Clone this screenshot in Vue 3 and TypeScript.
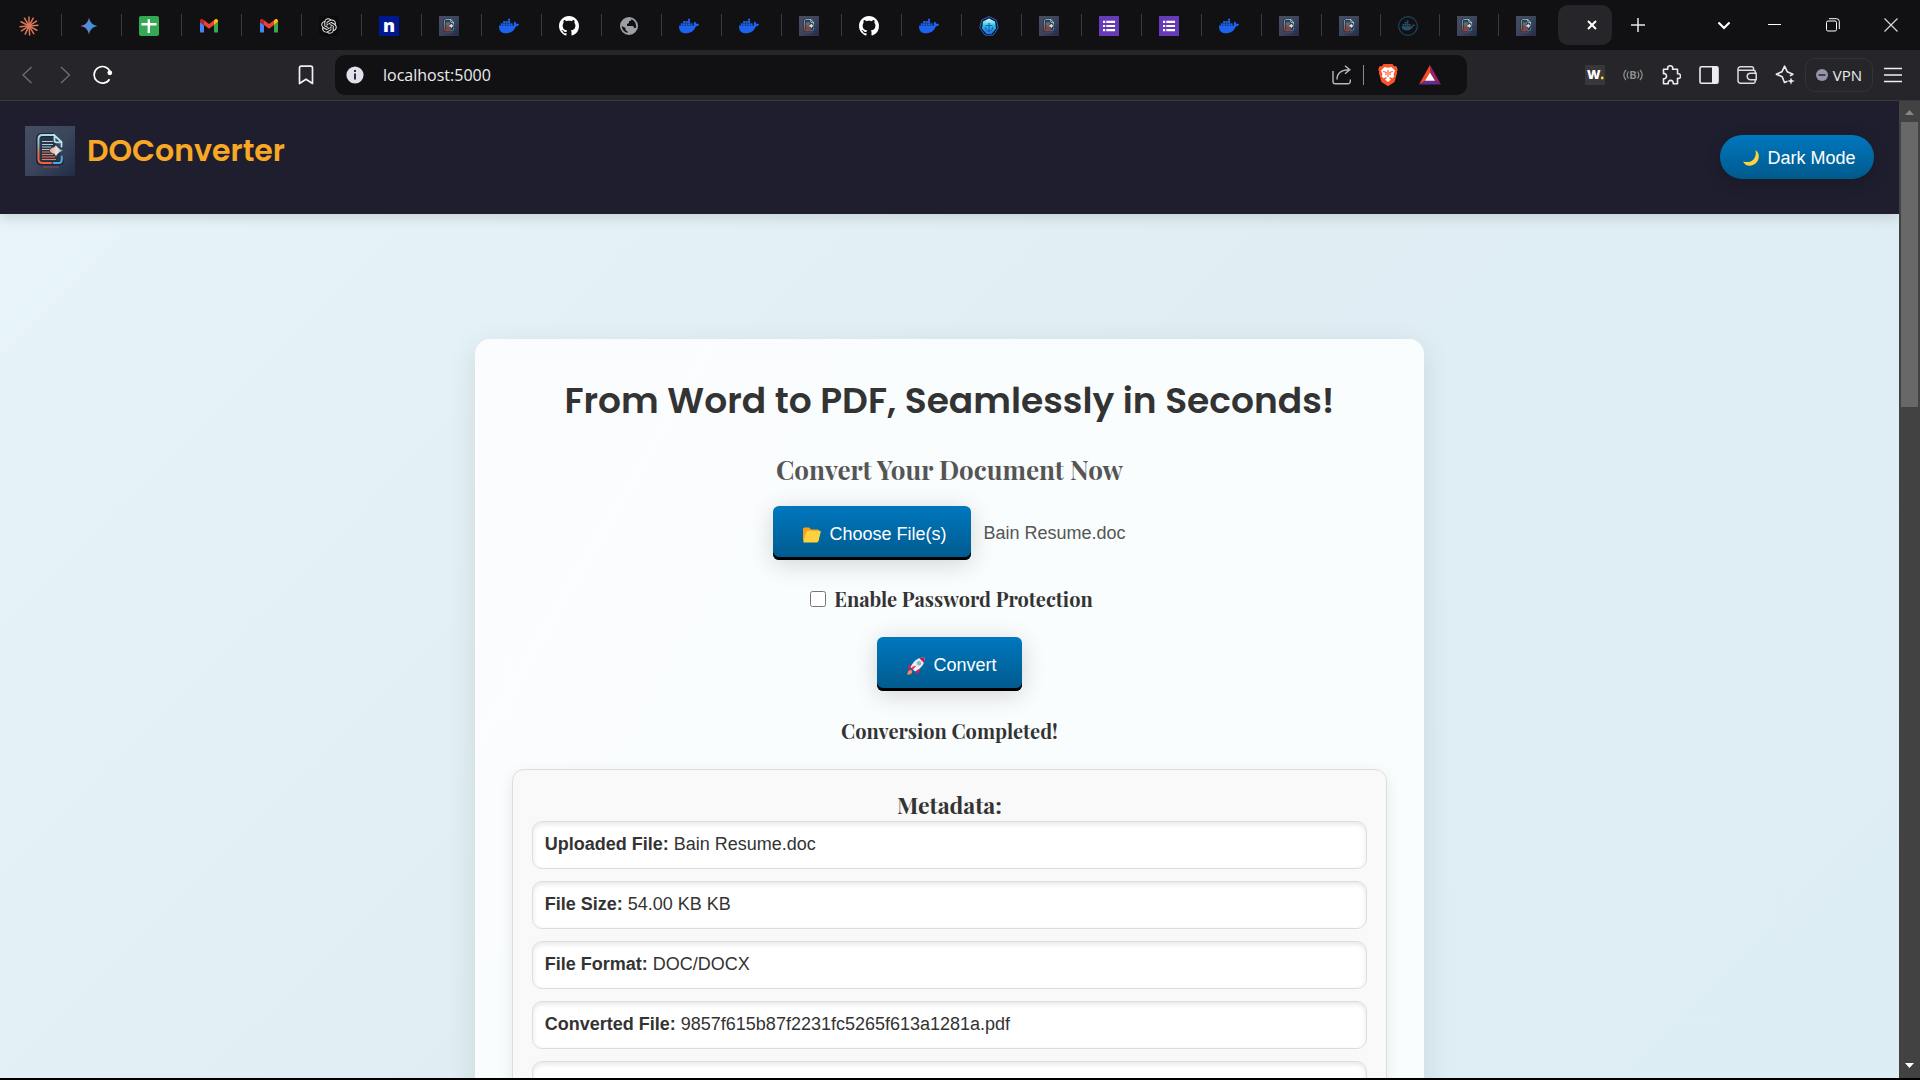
<script setup lang="ts">
import { ref } from 'vue'

interface Tab {
  icon: string
  title: string
}

interface MetaItem {
  label: string
  value: string
}

const titles: Record<string, string> = {
  burst: 'Claude',
  spark: 'Gemini',
  sheet: 'Sheets',
  mail: 'Gmail',
  knot: 'ChatGPT',
  letter: 'Notes',
  doc: 'DOConverter',
  whale: 'Docker',
  cat: 'GitHub',
  globe: 'Website',
  helm: 'Play with Kubernetes',
  form: 'Forms',
  whaledim: 'Docker Hub',
}

const order = [
  'burst', 'spark', 'sheet', 'mail', 'mail', 'knot', 'letter', 'doc', 'whale', 'cat', 'globe',
  'whale', 'whale', 'doc', 'cat', 'whale', 'helm', 'doc', 'form', 'form', 'whale', 'doc',
  'doc', 'whaledim', 'doc', 'doc',
]

const tabs: Tab[] = order.map((icon) => ({ icon, title: titles[icon] }))

const address = ref('localhost:5000')
const protect = ref(false)

const metadata: MetaItem[] = [
  { label: 'Uploaded File:', value: 'Bain Resume.doc' },
  { label: 'File Size:', value: '54.00 KB KB' },
  { label: 'File Format:', value: 'DOC/DOCX' },
  { label: 'Converted File:', value: '9857f615b87f2231fc5265f613a1281a.pdf' },
  { label: '', value: '' },
]

const rays = [0, 28, 57, 86, 118, 148, 176, 205, 238, 266, 298, 330]
</script>

<template>
  <div class="browser">
    <svg class="sprite" width="0" height="0" aria-hidden="true">
      <defs>
        <linearGradient id="g-spark" x1="0" y1="0" x2="1" y2="0">
          <stop offset="0" stop-color="#b06a9e" />
          <stop offset=".35" stop-color="#5f86d8" />
          <stop offset="1" stop-color="#1ba1e3" />
        </linearGradient>
        <linearGradient id="g-tile" x1="0" y1="0" x2="1" y2="1">
          <stop offset="0" stop-color="#474e63" />
          <stop offset=".5" stop-color="#3b455b" />
          <stop offset="1" stop-color="#222c47" />
        </linearGradient>
        <linearGradient id="g-page" x1="0" y1="0" x2="0" y2="1">
          <stop offset="0" stop-color="#a9dde6" />
          <stop offset=".35" stop-color="#8fb9c6" />
          <stop offset=".6" stop-color="#dd7a5a" />
          <stop offset="1" stop-color="#f0603a" />
        </linearGradient>
        <linearGradient id="g-star" x1="0" y1="0" x2="1" y2="0">
          <stop offset="0" stop-color="#f0a58c" />
          <stop offset=".55" stop-color="#e8e4dc" />
          <stop offset="1" stop-color="#56b8e8" />
        </linearGradient>
        <linearGradient id="g-helm" x1="0" y1="0" x2="0" y2="1">
          <stop offset="0" stop-color="#e6fbfb" />
          <stop offset=".45" stop-color="#28c8d8" />
          <stop offset="1" stop-color="#2a6be0" />
        </linearGradient>
      </defs>
      <symbol id="burst" viewBox="0 0 20 20">
        <g stroke="#d97757" stroke-width="1.5" stroke-linecap="round">
          <line v-for="a in rays" :key="a" x1="10" y1="9" x2="10" y2="1" :transform="`rotate(${a} 10 10)`" />
        </g>
        <circle cx="10" cy="10" r="2.4" fill="#d97757" />
      </symbol>
      <symbol id="spark" viewBox="0 0 20 20">
        <path d="M10 1.500C11 6.500 13.500 9 18.500 10C13.500 11 11 13.500 10 18.500C9 13.500 6.500 11 1.500 10C6.500 9 9 6.500 10 1.500z" fill="url(#g-spark)" />
      </symbol>
      <symbol id="sheet" viewBox="0 0 20 20">
        <rect width="20" height="20" rx="2" fill="#34a853" />
        <path d="M2.500 8.200h15M9.800 3.200v13.800" stroke="#fff" stroke-width="2.400" />
      </symbol>
      <symbol id="mail" viewBox="0 0 20 20">
        <path d="M1 16.600V6l4 3v7.600H2.200A1.200 1.200 0 0 1 1 15.400z" fill="#4285f4" />
        <path d="M15 16.600V9l4-3v9.400a1.200 1.200 0 0 1-1.200 1.200z" fill="#34a853" />
        <path d="M15 4.300V9l4-3V4.800c0-1.700-2-2.300-3-1.300z" fill="#fbbc04" />
        <path d="M5 9V4.300l5 3.700 5-3.700V9l-5 3.800z" fill="#ea4335" />
        <path d="M1 4.800V6l4 3V4.300L4 3.500c-1.200-1-3-.3-3 1.300z" fill="#c5221f" />
      </symbol>
      <symbol id="knot" viewBox="0 0 20 20">
        <rect width="20" height="20" rx="4" fill="#0b0b0c" />
        <path transform="translate(2.200 2.200) scale(.65)" fill="#e6e6e8" d="M22.2819 9.8211a5.9847 5.9847 0 0 0-.5157-4.9108 6.0462 6.0462 0 0 0-6.5098-2.9A6.0651 6.0651 0 0 0 4.9807 4.1818a5.9847 5.9847 0 0 0-3.9977 2.9 6.0462 6.0462 0 0 0 .7427 7.0966 5.98 5.98 0 0 0 .511 4.9107 6.051 6.051 0 0 0 6.5146 2.9001A5.9847 5.9847 0 0 0 13.2599 24a6.0557 6.0557 0 0 0 5.7718-4.2058 5.9894 5.9894 0 0 0 3.9977-2.9001 6.0557 6.0557 0 0 0-.7475-7.0729zm-9.022 12.6081a4.4755 4.4755 0 0 1-2.8764-1.0408l.1419-.0804 4.7783-2.7582a.7948.7948 0 0 0 .3927-.6813v-6.7369l2.02 1.1686a.071.071 0 0 1 .038.052v5.5826a4.504 4.504 0 0 1-4.4945 4.4944zm-9.6607-4.1254a4.4708 4.4708 0 0 1-.5346-3.0137l.142.0852 4.783 2.7582a.7712.7712 0 0 0 .7806 0l5.8428-3.3685v2.3324a.0804.0804 0 0 1-.0332.0615L9.74 19.9502a4.4992 4.4992 0 0 1-6.1408-1.6464zM2.3408 7.8956a4.485 4.485 0 0 1 2.3655-1.9728V11.6a.7664.7664 0 0 0 .3879.6765l5.8144 3.3543-2.0201 1.1685a.0757.0757 0 0 1-.071 0l-4.8303-2.7865A4.504 4.504 0 0 1 2.3408 7.872zm16.5963 3.8558L13.1038 8.364 15.1192 7.2a.0757.0757 0 0 1 .071 0l4.8303 2.7913a4.4944 4.4944 0 0 1-.6765 8.1042v-5.6772a.79.79 0 0 0-.407-.667zm2.0107-3.0231l-.142-.0852-4.7735-2.7818a.7759.7759 0 0 0-.7854 0L9.409 9.2297V6.8974a.0662.0662 0 0 1 .0284-.0615l4.8303-2.7866a4.4992 4.4992 0 0 1 6.6802 4.66zM8.3065 12.863l-2.02-1.1638a.0804.0804 0 0 1-.038-.0567V6.0742a4.4992 4.4992 0 0 1 7.3757-3.4537l-.142.0805L8.704 5.459a.7948.7948 0 0 0-.3927.6813zm1.0976-2.3654l2.602-1.4998 2.6069 1.4998v2.9994l-2.5974 1.4997-2.6067-1.4997Z" />
      </symbol>
      <symbol id="doc" viewBox="0 0 50 50">
        <rect width="50" height="50" fill="url(#g-tile)" />
        <path d="M28.500 9H17c-2.500 0-4 1.500-4 4v20.500c0 2.500 1.500 4 4 4h17c2 0 3-1 3-3" fill="#2a3347" stroke="#1c2438" stroke-width="4" />
        <path d="M29 9H17.500C15 9 13.500 10.500 13.500 13v20c0 2.500 1.500 4 4 4H26" fill="none" stroke="url(#g-page)" stroke-width="2" stroke-linecap="round" />
        <path d="M28.500 37H34c1.800 0 2.700-1.200 2.700-3v-3.500" fill="none" stroke="#4fa9dc" stroke-width="2" stroke-linecap="round" />
        <path d="M29 9l7.500 7v4.500M29.500 9.500v5c0 1.200.8 1.800 2 1.800h4.500" fill="none" stroke="#b5e6ec" stroke-width="1.800" stroke-linecap="round" stroke-linejoin="round" />
        <g stroke-width="1">
          <path d="M17 15.500h11M17 18.500h11M17 21h9" stroke="#9fd0dc" />
          <path d="M17 23.500h8" stroke="#c9b8b4" />
          <path d="M17 26h8M17 28.500h11M17 31h13M17 33.500h14" stroke="#e57f62" />
          <path d="M18 41h16" stroke="#8a4a52" />
        </g>
        <path d="M31 18.500c1.200 2.800 3.500 4.800 7.800 6-4.300 1.400-6.600 3.400-7.800 6.500-.8-2-1.500-3-2.700-3.200-1.800-.2-3.300-1.600-3.800-3.300.5-1.700 2-3.100 3.800-3.300 1.200-.2 2-1 2.700-2.700z" fill="url(#g-star)" stroke="#2a3347" stroke-width=".6" />
      </symbol>
      <symbol id="whale" viewBox="0 0 24 24">
        <path fill="#1d63ed" d="M13.983 11.078h2.119a.186.186 0 00.186-.185V9.006a.186.186 0 00-.186-.186h-2.119a.185.185 0 00-.185.185v1.888c0 .102.083.185.185.185m-2.954-5.430h2.118a.186.186 0 00.186-.186V3.574a.186.186 0 00-.186-.185h-2.118a.185.185 0 00-.185.185v1.888c0 .102.082.185.185.185m0 2.716h2.118a.187.187 0 00.186-.186V6.290a.186.186 0 00-.186-.185h-2.118a.185.185 0 00-.185.185v1.887c0 .102.082.185.185.186m-2.930 0h2.120a.186.186 0 00.184-.186V6.290a.185.185 0 00-.185-.185H8.100a.185.185 0 00-.185.185v1.887c0 .102.083.185.185.186m-2.964 0h2.119a.186.186 0 00.185-.186V6.290a.185.185 0 00-.185-.185H5.136a.186.186 0 00-.186.185v1.887c0 .102.084.185.186.186m5.893 2.715h2.118a.186.186 0 00.186-.185V9.006a.186.186 0 00-.186-.186h-2.118a.185.185 0 00-.185.185v1.888c0 .102.082.185.185.185m-2.930 0h2.120a.185.185 0 00.184-.185V9.006a.185.185 0 00-.184-.186h-2.120a.185.185 0 00-.184.185v1.888c0 .102.083.185.185.185m-2.964 0h2.119a.185.185 0 00.185-.185V9.006a.185.185 0 00-.184-.186h-2.120a.186.186 0 00-.186.186v1.887c0 .102.084.185.186.185m-2.920 0h2.120a.185.185 0 00.184-.185V9.006a.185.185 0 00-.184-.186h-2.120a.185.185 0 00-.184.185v1.888c0 .102.082.185.185.185M23.763 9.890c-.065-.051-.672-.510-1.954-.510-.338.001-.676.030-1.010.087-.248-1.700-1.653-2.530-1.716-2.566l-.344-.199-.226.327c-.284.438-.490.922-.612 1.430-.230.970-.090 1.882.403 2.661-.595.332-1.550.413-1.744.420H.751a.751.751 0 00-.750.748 11.376 11.376 0 00.692 4.062c.545 1.428 1.355 2.480 2.410 3.124 1.180.723 3.100 1.137 5.275 1.137.983.003 1.963-.086 2.930-.266a12.248 12.248 0 003.823-1.389c.980-.567 1.860-1.288 2.610-2.136 1.252-1.418 1.998-2.997 2.553-4.400h.221c1.372 0 2.215-.549 2.680-1.009.309-.293.550-.650.707-1.046l.098-.288Z" />
      </symbol>
      <symbol id="whaledim" viewBox="0 0 20 20">
        <circle cx="10" cy="10" r="9.300" fill="none" stroke="#21415a" stroke-width="1.200" />
        <g fill="#2a516c">
          <path d="M3.500 10.200h10.300c.8-.2 1-.9.700-2.200l1 .8c.8-.2 1.400-.1 1.800.2-.4.800-1 1.100-2 1.100-1.200 3-3.500 4.400-6.500 4.400-3.200 0-5-1.300-5.300-4.300z" />
          <path d="M4.500 8h1.700v1.700H4.500zM6.600 8h1.700v1.700H6.600zM8.700 8h1.700v1.700H8.700zM10.800 8h1.700v1.700h-1.700zM6.600 6h1.700v1.700H6.600zM8.700 6h1.700v1.700H8.700zM8.700 4.200h1.700v1.500H8.700z" />
        </g>
      </symbol>
      <symbol id="cat" viewBox="0 0 16 16">
        <path fill="#fff" d="M8 0C3.580 0 0 3.580 0 8c0 3.540 2.290 6.530 5.470 7.590.4.070.55-.17.55-.38 0-.19-.010-.82-.010-1.490-2.010.37-2.530-.49-2.690-.94-.09-.23-.48-.94-.82-1.130-.28-.15-.68-.52-.010-.53.63-.010 1.080.58 1.230.82.72 1.210 1.870.87 2.330.66.070-.52.28-.87.51-1.070-1.780-.2-3.640-.89-3.640-3.950 0-.87.31-1.590.82-2.150-.08-.2-.36-1.020.08-2.120 0 0 .67-.21 2.200.82.64-.18 1.320-.27 2-.27s1.360.09 2 .27c1.530-1.040 2.200-.82 2.200-.82.44 1.100.16 1.920.08 2.120.51.56.82 1.270.82 2.150 0 3.070-1.870 3.750-3.650 3.950.29.25.54.73.54 1.480 0 1.070-.010 1.930-.010 2.200 0 .21.15.46.55.38A8.010 8.010 0 0016 8c0-4.420-3.580-8-8-8z" />
      </symbol>
      <symbol id="globe" viewBox="0 0 20 20">
        <circle cx="10" cy="10" r="8.100" fill="none" stroke="#9aa0a6" stroke-width="1.800" />
        <path d="M2 9.500C2.500 5.500 5.500 2 10 2l2.500.400c.3 1.400-.6 2.600-2.500 2.700v1.900L8 8v2h5.500c1 0 1.500.8 1.500 2h2.500c-.5 3-3.500 6-7.500 6l-1.500-.3V15.500L6.500 14v-2z" fill="#9aa0a6" />
      </symbol>
      <symbol id="helm" viewBox="0 0 20 20">
        <path d="M10 .6l7.300 3.500 1.900 7.800-5.100 7.300H5.900L.8 11.900l1.900-7.800z" fill="#0d1730" stroke="#2d63c8" stroke-width="1" />
        <path d="M10 2.500l6 3 1 7-4.500 5.500h-5L3 12.500l1-7z" fill="url(#g-helm)" />
        <path d="M10 7v9M6 11c.5 2.500 2 4 4 4.500 2-.5 3.500-2 4-4.500M6.500 9.500h7" fill="none" stroke="#1d5cc8" stroke-width="1.200" />
      </symbol>
      <symbol id="form" viewBox="0 0 20 20">
        <rect width="20" height="20" fill="#673ab7" />
        <path d="M4 4.800h2.200V7H4zM4 8.900h2.200v2.200H4zM4 13h2.200v2.200H4zM7.300 4.800H16V7H7.300zM7.300 8.900H16v2.200H7.300zM7.300 13H16v2.200H7.300z" fill="#fff" />
      </symbol>
    </svg>

    <div class="tabstrip" role="tablist">
      <button
        v-for="(tab, i) in tabs"
        :key="i"
        class="tab"
        :class="{ narrow: i > 21, last: i === tabs.length - 1 }"
        role="tab"
        :aria-label="tab.title"
      >
        <span v-if="tab.icon === 'letter'" class="letter">n</span>
        <svg v-else width="20" height="20"><use :href="`#${tab.icon}`" /></svg>
      </button>
      <button class="tab-active" aria-label="Close tab">
        <svg width="12" height="12" viewBox="0 0 12 12"><path d="M2 2l8 8M10 2l-8 8" stroke="#fff" stroke-width="2" /></svg>
      </button>
      <button class="plain new-tab" aria-label="New tab">
        <svg width="14" height="14" viewBox="0 0 14 14"><path d="M7 0v14M0 7h14" stroke="#e8e8ea" stroke-width="1.500" /></svg>
      </button>
      <div class="window-controls">
        <button class="plain search-tabs" aria-label="Search tabs">
          <svg width="14" height="14" viewBox="0 0 14 14"><path d="M1.500 4.500L7 10l5.500-5.500" fill="none" stroke="#fff" stroke-width="2.200" /></svg>
        </button>
        <button class="plain" aria-label="Minimize">
          <svg width="14" height="14" viewBox="0 0 14 14"><path d="M0 6.500h13" stroke="#fff" /></svg>
        </button>
        <button class="plain" aria-label="Restore">
          <svg width="14" height="14" viewBox="0 0 14 14"><rect x=".5" y="3" width="10" height="10" rx="1.500" fill="none" stroke="#fff" /><path d="M3 .7h7.500a2.800 2.800 0 0 1 2.800 2.800V11" fill="none" stroke="#fff" /></svg>
        </button>
        <button class="plain" aria-label="Close window">
          <svg width="14" height="14" viewBox="0 0 14 14"><path d="M.5.5l13 13M13.500.5l-13 13" stroke="#d8d8da" stroke-width="1.200" /></svg>
        </button>
      </div>
    </div>

    <div class="toolbar">
      <nav class="nav-buttons">
        <button class="plain" aria-label="Back">
          <svg width="20" height="20" viewBox="0 0 20 20"><path d="M14.500 2L6 10l8.500 8" fill="none" stroke="#6f6f74" stroke-width="1.300" /></svg>
        </button>
        <button class="plain" aria-label="Forward">
          <svg width="20" height="20" viewBox="0 0 20 20"><path d="M6 2l8.500 8L6 18" fill="none" stroke="#6f6f74" stroke-width="1.300" /></svg>
        </button>
        <button class="plain" aria-label="Reload">
          <svg width="20" height="20" viewBox="0 0 20 20"><path d="M16.500 14.200A8.300 8.300 0 1 1 16.900 6.200" fill="none" stroke="#fff" stroke-width="1.700" /><circle cx="16.800" cy="7.800" r="2.400" fill="#fff" /></svg>
        </button>
      </nav>
      <button class="plain bookmark" aria-label="Bookmark">
        <svg width="20" height="20" viewBox="0 0 20 20"><path d="M3.500 3a1.800 1.800 0 0 1 1.800-1.800h9.400A1.800 1.800 0 0 1 16.500 3v15.500L10 14.300l-6.500 4.200z" fill="none" stroke="#f0f0f2" stroke-width="1.700" stroke-linejoin="round" /></svg>
      </button>
      <div class="omnibox">
        <svg width="18" height="18" viewBox="0 0 18 18"><circle cx="9" cy="9" r="8.600" fill="#e2e0ea" /><path d="M9 4v2M9 7.500V13.500" stroke="#2c2c30" stroke-width="2" /></svg>
        <input v-model="address" class="address" type="text" aria-label="Address" />
        <button class="plain" aria-label="Share">
          <svg width="20" height="20" viewBox="0 0 20 20"><path d="M1 6v10.500A2.300 2.300 0 0 0 3.300 18.800H16a2.300 2.300 0 0 0 2.300-2.300V14.500M5 14.500C5 8.500 9 4.800 17.500 4.800M13 .8l4.800 4-4.800 4" fill="none" stroke="#b9b9bd" stroke-width="1.400" /></svg>
        </button>
        <span class="omni-divider"></span>
        <button class="plain" aria-label="Shields">
          <svg width="20" height="24" viewBox="0 0 20 24">
            <path d="M5.500 1h9l1.500 2 2.500.2 1.300 3.800-1 1.500.3 1.500-2.600 9L10 23.300 3.500 19 .9 10l.3-1.500-1-1.500 1.300-3.800L4 3z" fill="#fb542b" />
            <path d="M10 4.800l3.500-.8 3.500 3.500-1.500 4 .8 1.500-1.600 2.300-2.700-1-1 .7 2 1.500-3 2.600-3-2.600 2-1.500-1-.7-2.700 1L3.700 13l.8-1.500L3 7.500 6.500 4z" fill="#fff" />
            <path d="M5.200 8.500l3 .8-.4 3M14.800 8.500l-3 .8.400 3M10 7v7" fill="none" stroke="#fb542b" stroke-width="1.100" />
          </svg>
        </button>
        <button class="plain" aria-label="Rewards">
          <svg width="24" height="24" viewBox="0 0 24 24">
            <path d="M12 2L1 21.500l6.500-4L12 9.500z" fill="#ff4724" />
            <path d="M12 2l11 19.500-6.500-4L12 9.500z" fill="#9e1f63" />
            <path d="M1 21.500h22l-6.500-4h-9z" fill="#662d91" />
            <path d="M12 9.500l5 8.200H7z" fill="#fff" />
          </svg>
        </button>
      </div>
      <div class="extensions">
        <button class="plain" aria-label="Wordtune">
          <svg width="20" height="20" viewBox="0 0 20 20"><rect width="20" height="20" fill="#38383a" /><text x="2" y="14" font-family="Open Sans, sans-serif" font-size="13" font-weight="800" fill="#fff">W</text><circle cx="17.200" cy="13" r="1.400" fill="#f0e030" /></svg>
        </button>
        <button class="plain" aria-label="Broadcast">
          <svg width="20" height="20" viewBox="0 0 20 20"><path d="M3 5c-2.600 3-2.600 7 0 10M5.500 6.500c-1.700 2.200-1.700 4.800 0 7M17 5c2.600 3 2.600 7 0 10M14.500 6.500c1.700 2.200 1.700 4.800 0 7" fill="none" stroke="#8d8d92" stroke-width="1.200" /><text x="10" y="14" text-anchor="middle" font-family="Roboto, sans-serif" font-size="11" font-weight="700" fill="#8d8d92">B</text></svg>
        </button>
        <button class="plain" aria-label="Extensions">
          <svg width="20" height="20" viewBox="0 0 20 20"><path d="M2.500 4.300h4.300c-.6-2.600.8-3.500 2.400-3.500s3 .9 2.400 3.500h4.900v4.500c2.300-.5 3 .9 3 2.300s-.7 2.800-3 2.300v5.300h-4.300c.3-2.300-.9-3.300-2.500-3.300s-2.800 1-2.500 3.300H2.500v-5c2.400.3 3-1.100 3-2.600s-.6-2.800-3-2.400z" fill="none" stroke="#ececf0" stroke-width="1.600" stroke-linejoin="round" /></svg>
        </button>
        <button class="plain" aria-label="Sidebar">
          <svg width="20" height="20" viewBox="0 0 20 20"><rect x="1" y="1.800" width="18" height="16.400" rx="1.500" fill="none" stroke="#ececf0" stroke-width="1.600" /><path d="M13 2h6v16h-6z" fill="#ececf0" /></svg>
        </button>
        <button class="plain" aria-label="Wallet">
          <svg width="20" height="20" viewBox="0 0 20 20"><path d="M16.500 5V3.300A1.500 1.500 0 0 0 15 1.800H3.500a2.500 2.500 0 0 0-2.500 2.500v11.400a2.500 2.500 0 0 0 2.500 2.500h13a1.700 1.700 0 0 0 1.700-1.700v-1M1.300 5.200H16.700a1.600 1.600 0 0 1 1.600 1.600v1.300M19.200 8.200H13.500a3.300 3.300 0 0 0 0 6.600h5.700z" fill="none" stroke="#dcdce0" stroke-width="1.500" /></svg>
        </button>
        <button class="plain" aria-label="Assistant">
          <svg width="20" height="20" viewBox="0 0 20 20"><path d="M12.500 16.300L9.500 17.500 7.200 11.800 1.300 9.200 7 6.700 9.600 1.200 12.200 6.700l5.700 2.500-3 1.700" fill="none" stroke="#ececf0" stroke-width="1.600" stroke-linejoin="round" /><path d="M16 12.500l1 2.600 2.800 1-2.800 1-1 2.600-1-2.600-2.600-1 2.600-1z" fill="#ececf0" /></svg>
        </button>
        <button class="vpn">
          <svg width="12" height="12" viewBox="0 0 12 12"><circle cx="6" cy="6" r="6" fill="#9694a8" /><path d="M2.500 6h7" stroke="#26262a" stroke-width="1.500" /></svg>
          VPN
        </button>
        <button class="plain menu" aria-label="Menu">
          <svg width="20" height="20" viewBox="0 0 20 20"><path d="M1 3.500h18M1 10h18M1 16.500h18" stroke="#f0f0f2" stroke-width="1.500" /></svg>
        </button>
      </div>
    </div>

    <div class="viewport">
      <div class="page">
        <header class="site-header">
          <a class="brand" href="#">
            <svg width="50" height="50"><use href="#doc" /></svg>
            <span>DOConverter</span>
          </a>
          <button class="mode">
            <svg width="18" height="18" viewBox="0 0 18 18"><path d="M13.500 1c2.600 1.800 3.700 4.600 3.200 7.800-.7 4.600-4.600 7.900-9 7.900-3 0-5.400-1.600-6.700-4.300 4.200 1.400 8.200.6 10.700-2.200 2-2.400 2.600-5.800 1.800-9.200z" fill="#ffd43b" /></svg>
            Dark Mode
          </button>
        </header>

        <main class="card">
          <h1>From Word to PDF, Seamlessly in Seconds!</h1>
          <h2>Convert Your Document Now</h2>
          <div class="picker">
            <button class="action">
              <svg width="18" height="18" viewBox="0 0 18 18"><path d="M0 3.200C0 2.200.6 1.600 1.600 1.600h4.500l2 2h6.400c.9 0 1.500.6 1.500 1.500V14H0z" fill="#f9a01b" /><path d="M3.600 5.600c.2-.6.700-.9 1.300-.9H16.700c.8 0 1.200.6 1 1.300l-2.200 9.100c-.2.900-.8 1.400-1.700 1.400H1.200c-.8 0-1.100-.5-.9-1.200z" fill="#fdd23e" /></svg>
              Choose File(s)
            </button>
            <span class="file-name">Bain Resume.doc</span>
          </div>
          <label class="protect">
            <input v-model="protect" type="checkbox" />
            <span>Enable Password Protection</span>
          </label>
          <button class="action convert">
            <svg width="18" height="18" viewBox="0 0 18 18">
              <path d="M6 7L1 9l-.5 4L4 11zM9.500 13.500L7.800 17.300 12 15.500 13.500 11z" fill="#d81b60" />
              <path d="M17.500.5C11.500.3 7 3 3.600 10L8 14.400C15 11 17.700 6.500 17.500.5z" fill="#eceff1" />
              <path d="M17.500.5c-1.900-.1-3.600.1-5.200.7l4.500 4.500c.6-1.600.8-3.400.7-5.200z" fill="#c2185b" />
              <circle cx="12" cy="6.200" r="2" fill="#7cbbe0" stroke="#90a4ae" stroke-width=".6" />
              <path d="M9.500 8.500L4 14.500 5.500 9.800z" fill="#e91e63" />
              <path d="M3.800 12.800c-1.800.3-3.300 1.300-3.500 4.900 3.600-.2 4.800-1.500 5-3.300z" fill="#ff8a50" />
            </svg>
            Convert
          </button>
          <p class="status">Conversion Completed!</p>
          <section class="metadata">
            <h3>Metadata:</h3>
            <div v-for="(item, i) in metadata" :key="i" class="meta-row">
              <strong>{{ item.label }}</strong> {{ item.value }}
            </div>
          </section>
        </main>
      </div>
      <div class="scrollbar" aria-hidden="true">
        <svg width="9" height="5" viewBox="0 0 9 5"><path d="M4.500 0L9 5H0z" fill="#868686" /></svg>
        <span class="thumb"></span>
        <svg width="9" height="5" viewBox="0 0 9 5"><path d="M4.500 5L0 0h9z" fill="#fff" /></svg>
      </div>
    </div>
  </div>
</template>

<style>
body {
  margin: 0;
  overflow: hidden;
}
</style>

<style scoped>
.browser {
  display: flex;
  flex-direction: column;
  height: 100vh;
  box-sizing: border-box;
  border-bottom: 2px solid #000;
  background: #111113;
  font-family: "Liberation Sans", Arial, sans-serif;
  color: #333;
}
.browser * {
  box-sizing: border-box;
}
.sprite {
  position: absolute;
}
svg {
  display: block;
  flex: none;
}
button {
  margin: 0;
  padding: 0;
  border: 0;
  background: none;
  font: inherit;
  color: inherit;
}
.plain {
  display: flex;
  align-items: center;
  justify-content: center;
}

/* tab strip */
.tabstrip {
  display: flex;
  align-items: center;
  flex: none;
  height: 50px;
  padding-left: 2px;
}
.tab {
  display: flex;
  align-items: flex-end;
  flex: none;
  width: 60px;
  height: 22px;
  padding-left: 17px;
  border-right: 1px solid #3b3b3f;
}
.tab.narrow {
  width: 59px;
}
.tab.last {
  border-color: transparent;
}
.letter {
  width: 20px;
  height: 20px;
  background: #00188f;
  color: #fff;
  font-family: "Open Sans", sans-serif;
  font-size: 18px;
  font-weight: 800;
  line-height: 18px;
  text-align: center;
}
.tab-active {
  display: flex;
  align-items: center;
  justify-content: flex-end;
  flex: none;
  width: 54px;
  height: 40px;
  padding-right: 14px;
  border-radius: 10px;
  background: #26262a;
}
.new-tab {
  width: 52px;
  height: 40px;
}
.window-controls {
  display: flex;
  margin-left: auto;
}
.window-controls .plain {
  width: 58px;
  height: 50px;
}
.window-controls .search-tabs {
  width: 44px;
}

/* toolbar */
.toolbar {
  display: flex;
  align-items: center;
  flex: none;
  height: 51px;
  padding: 0 17px;
  border-bottom: 1px solid #39393c;
  background: #26262a;
}
.nav-buttons {
  display: flex;
  gap: 18px;
}
.bookmark {
  margin-left: 183px;
}
.omnibox {
  display: flex;
  align-items: center;
  flex: 1;
  height: 40px;
  margin-left: 19px;
  padding: 0 25px 0 11px;
  border-radius: 10px;
  background: #111113;
}
.address {
  flex: 1;
  min-width: 0;
  margin-left: 19px;
  padding: 0;
  border: 0;
  outline: 0;
  background: none;
  color: #ececf0;
  font-family: "Open Sans", "Noto Sans", sans-serif;
  font-size: 16px;
  line-height: 24px;
}
.omni-divider {
  width: 1px;
  height: 20px;
  margin: 0 14px 0 11px;
  background: #8a8a8e;
}
.omnibox .plain + .plain {
  margin-left: 20px;
}
.extensions {
  display: flex;
  align-items: center;
  gap: 18px;
  margin-left: 118px;
}
.vpn {
  display: flex;
  align-items: center;
  justify-content: center;
  gap: 5px;
  width: 68px;
  height: 34px;
  margin-left: -8px;
  border: 1px solid #333338;
  border-radius: 10px;
  color: #ececf0;
  font-family: "Open Sans", "Noto Sans", sans-serif;
  font-size: 15px;
}
.menu {
  margin-left: -8px;
}

/* page */
.viewport {
  display: flex;
  flex: 1;
  min-height: 0;
}
.page {
  flex: 1;
  min-width: 0;
  overflow: hidden;
  background: linear-gradient(135deg, #e8f4f9 0%, #e0eef4 50%, #ddedf4 100%);
}
.site-header {
  display: flex;
  align-items: flex-start;
  justify-content: space-between;
  height: 113px;
  padding: 25px;
  background: #1f1e2e;
  box-shadow: 0 4px 12px rgba(0, 0, 0, 0.13);
}
.brand {
  display: flex;
  align-items: center;
  gap: 12px;
  color: #f9a826;
  font-family: Poppins, Inter, sans-serif;
  font-size: 30px;
  font-weight: 600;
  line-height: 50px;
  text-decoration: none;
}
.mode {
  display: flex;
  align-items: center;
  justify-content: center;
  gap: 7px;
  width: 154px;
  height: 44px;
  margin-top: 9px;
  padding: 2px 0 0 4px;
  border-radius: 22px;
  background: linear-gradient(#0077be, #005a8c);
  box-shadow: 0 4px 15px rgba(0, 0, 0, 0.2);
  color: #fff;
  font-size: 18px;
}
.card {
  display: flex;
  flex-direction: column;
  align-items: center;
  width: 50%;
  margin: 125px auto 0;
  padding: 37px;
  border-radius: 15px;
  background: linear-gradient(120deg, #fbfcfe, #f9fdfd 50%);
  box-shadow: 0 8px 30px rgba(0, 0, 0, 0.1);
}
h1,
h2,
h3,
p {
  margin: 0;
}
h1 {
  font-family: Poppins, Inter, sans-serif;
  font-size: 36px;
  font-weight: 600;
  line-height: 50px;
  white-space: nowrap;
}
h2 {
  margin-top: 26px;
  color: #555;
  font-family: "Playfair Display", "Liberation Serif", serif;
  font-size: 26px;
  font-weight: 700;
  line-height: 36px;
}
.picker {
  display: flex;
  align-items: center;
  gap: 12px;
  margin-top: 18px;
}
.action {
  display: flex;
  align-items: center;
  gap: 8px;
  height: 54px;
  padding: 3px 25px 0 30px;
  border-radius: 6px;
  background: linear-gradient(#0077be, #005a8c);
  box-shadow: inset 0 -3px #000, 0 4px 24px rgba(0, 0, 0, 0.16);
  color: #fff;
  font-size: 18px;
}
.file-name {
  color: #555;
  font-size: 18px;
}
.protect {
  display: flex;
  align-items: center;
  gap: 8px;
  margin-top: 24px;
  padding-left: 4px;
}
.protect input {
  width: 16px;
  height: 16px;
  margin: 0;
}
.protect span,
.status {
  font-family: "Playfair Display", "Liberation Serif", serif;
  font-size: 20px;
  font-weight: 700;
  line-height: 30px;
}
.convert {
  margin-top: 23px;
}
.status {
  margin-top: 25px;
}
.metadata {
  align-self: stretch;
  margin-top: 23px;
  padding: 21px 19px;
  border: 1px solid #ddd;
  border-radius: 12px;
  background: #f9f9f9;
  box-shadow: 0 4px 15px rgba(0, 0, 0, 0.08);
}
h3 {
  margin-bottom: 2px;
  font-family: "Playfair Display", "Liberation Serif", serif;
  font-size: 23px;
  font-weight: 700;
  line-height: 28px;
  text-align: center;
}
.meta-row {
  height: 48px;
  margin-bottom: 12px;
  padding: 0 12px;
  border: 1px solid #ddd;
  border-radius: 10px;
  background: #fff;
  box-shadow: inset 0 2px 5px rgba(0, 0, 0, 0.1);
  font-size: 18px;
  line-height: 44px;
}

/* scrollbar */
.scrollbar {
  display: flex;
  flex-direction: column;
  align-items: center;
  flex: none;
  width: 21px;
  padding: 9px 0 10px;
  background: #424242;
}
.thumb {
  width: 17px;
  height: 29.7%;
  margin: 7px 0 auto;
  background: #686868;
}
</style>
